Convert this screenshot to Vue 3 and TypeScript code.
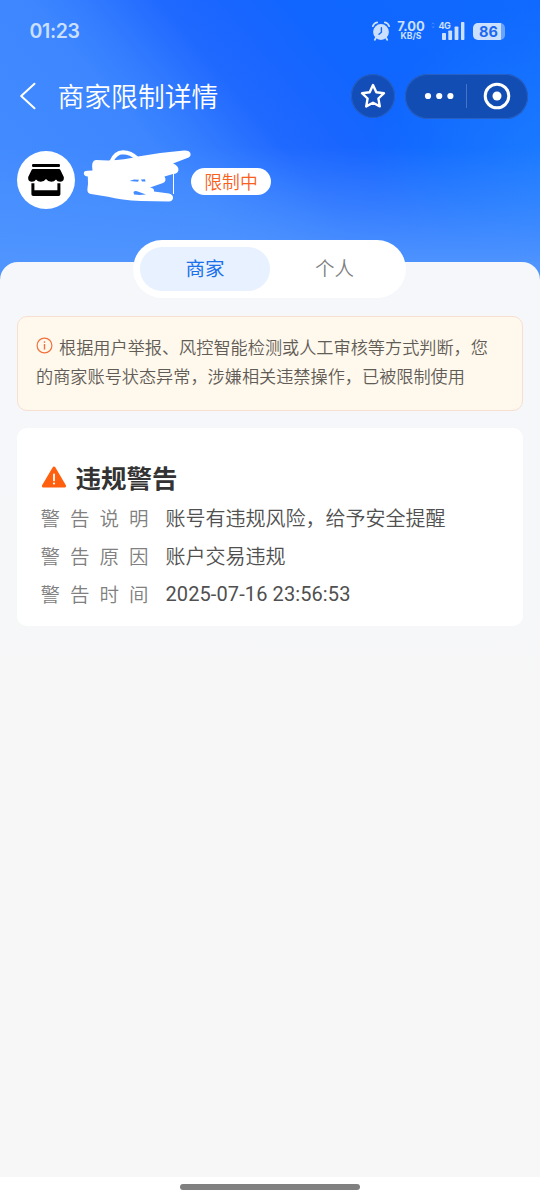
<script setup lang="ts">
import { ref } from 'vue'

interface DetailRow {
  label: string
  value: string
}

const tabs: string[] = ['商家', '个人']
const activeTab = ref(0)

const notice =
  '根据用户举报、风控智能检测或人工审核等方式判断，您的商家账号状态异常，涉嫌相关违禁操作，已被限制使用'

const rows: DetailRow[] = [
  { label: '警告说明', value: '账号有违规风险，给予安全提醒' },
  { label: '警告原因', value: '账户交易违规' },
  { label: '警告时间', value: '2025-07-16 23:56:53' },
]
</script>

<template>
  <div class="page">
    <header class="hero">
      <div class="status">
        <span class="clock">01:23</span>
        <div class="status-right">
          <svg class="alarm" width="20" height="20" viewBox="0 0 20 20">
            <circle cx="10" cy="11" r="7.9" fill="currentColor" />
            <path d="M1.8 5.2 Q3 2 6.2 1.4 M18.2 5.2 Q17 2 13.8 1.4" fill="none" stroke="currentColor" stroke-width="1.7" stroke-linecap="round" />
            <path d="M5 16.5 L3.8 18.8 M15 16.5 L16.2 18.8" stroke="currentColor" stroke-width="1.8" stroke-linecap="round" />
            <path d="M10.4 6.8 V11.2 L8 13.2" fill="none" stroke="#1768ff" stroke-width="1.4" stroke-linecap="round" />
          </svg>
          <div class="speed">
            <span class="speed-num">7.00</span>
            <span class="speed-unit">KB/S</span>
          </div>
          <svg class="signal" width="34" height="20" viewBox="0 0 34 20">
            <path d="M.9 3.4 L2.1 1.8 L3.3 3.4 M.9 5.2 L2.1 6.8 L3.3 5.2" fill="none" stroke="currentColor" stroke-width=".8" opacity=".35" />
            <text x="7.6" y="7.6" class="net">4G</text>
            <rect x="11" y="12" width="4" height="7" rx=".8" fill="currentColor" />
            <rect x="17.3" y="9.5" width="3.8" height="9.5" rx=".8" fill="currentColor" />
            <rect x="23.6" y="5.5" width="3.8" height="13.5" rx=".8" fill="currentColor" />
            <rect x="30" y="1" width="3.4" height="18" rx=".8" fill="currentColor" />
          </svg>
          <div class="battery"><span>86</span></div>
        </div>
      </div>

      <nav class="nav">
        <svg class="back" width="18" height="28" viewBox="0 0 18 28">
          <path d="M15.5 1.8 L2.2 14 L15.5 26.2" fill="none" stroke="#fff" stroke-width="2" stroke-linecap="round" stroke-linejoin="round" />
        </svg>
        <h1>商家限制详情</h1>
        <button class="star" aria-label="收藏">
          <svg width="28" height="28" viewBox="0 0 28 28">
            <path d="M14 3 L17.3 10.2 L25 11.2 L19.4 16.5 L20.8 24.4 L14 20.7 L7.2 24.4 L8.6 16.5 L3 11.2 L10.7 10.2 Z" fill="none" stroke="#fff" stroke-width="2.4" stroke-linejoin="round" />
          </svg>
        </button>
        <div class="capsule">
          <svg class="dots" width="30" height="8" viewBox="0 0 30 8">
            <circle cx="4" cy="4" r="3.1" fill="#fff" />
            <circle cx="15.2" cy="4" r="3.1" fill="#fff" />
            <circle cx="26.4" cy="4" r="3.1" fill="#fff" />
          </svg>
          <i class="split"></i>
          <svg class="target" width="28" height="28" viewBox="0 0 28 28">
            <circle cx="14" cy="14" r="11.8" fill="none" stroke="#fff" stroke-width="3" />
            <circle cx="14" cy="14" r="4.5" fill="#fff" />
          </svg>
        </div>
      </nav>

      <div class="profile">
        <div class="avatar">
          <svg width="38" height="36" viewBox="0 0 38 36">
            <rect x="5" y="2" width="28" height="3" rx="1.2" />
            <path d="M6 7 H32 Q33 7 33.4 8 L36.8 15 V17 Q36.2 19.8 33.2 19.8 Q30.2 19.8 29 17.6 Q27.3 19.8 24.3 19.8 Q21 19.8 19 17 Q17 19.8 13.7 19.8 Q10.7 19.8 9 17.6 Q7.8 19.8 4.8 19.8 Q1.8 19.8 1.2 17 V15 L4.6 8 Q5 7 6 7 Z" />
            <path d="M4.4 21.2 H7.4 V28.2 H30.4 V21.2 H33.4 V32.2 Q33.4 34 31.6 34 H6.2 Q4.4 34 4.4 32.2 Z" />
          </svg>
        </div>
        <svg class="scribble" width="110" height="56" viewBox="0 0 110 56">
          <path d="M28.5 13.5 Q32 4.5 40 4.2 Q48 4.4 54 10.5" fill="none" stroke="#fff" stroke-width="4" stroke-linecap="round" />
          <path
            fill="#fff"
            fill-rule="evenodd"
            d="M13 12 L25 12.5 Q42 12 55 8.5 Q78 4.5 101 2.6 Q107 2.4 107.6 6 Q108 9 103 10.6 L90 15.6 Q96 18 95.4 22.5 Q94.6 25.6 90 26 L81.5 28.4 Q84 33 80 35 L67 39.6 Q71.5 40 71 43.6 L86 45.6 Q90.6 47 90 50.3 Q89.6 53.4 86 53.4 L58 53 Q38 52.4 25 48.8 L8 46 Q4 45.6 4.4 41 L5 36 L4.8 28.6 Q.8 28 .8 25.2 Q1 22.8 4.5 22.8 L9.5 22.4 Q7.8 12.6 13 12 Z
               M46.5 33 L55 33.8 L56 31.8 L51 31.6 Z M58 31.4 L62 31.2 L62.5 33.4 L59 33.4 Z M50.5 44 Q51.5 42.8 54 43.2 L63 46.5 Q57 47.4 51 46.6 Z"
          />
          <path d="M90.5 25 V46" stroke="#fff" stroke-width="1" />
        </svg>
        <span class="tag">限制中</span>
      </div>
    </header>

    <main class="sheet">
      <div class="tabs" role="tablist">
        <button
          v-for="(tab, i) in tabs"
          :key="tab"
          class="tab"
          :class="{ active: activeTab === i }"
          role="tab"
          @click="activeTab = i"
        >{{ tab }}</button>
      </div>

      <section class="notice">
        <svg class="info" width="17" height="17" viewBox="0 0 17 17">
          <circle cx="8.5" cy="8.5" r="7.4" fill="none" stroke="#f2713c" stroke-width="1.2" />
          <rect x="7.8" y="7" width="1.4" height="5.6" fill="#f2713c" />
          <rect x="7.8" y="4.3" width="1.4" height="1.5" fill="#f2713c" />
        </svg>{{ notice }}
      </section>

      <section class="card">
        <h2>
          <svg class="warn" width="26" height="24" viewBox="0 0 26 24">
            <path d="M13 3 L23.6 21 H2.4 Z" fill="#ff6010" stroke="#ff6010" stroke-width="3" stroke-linejoin="round" />
            <path d="M13 9.5 V15.4" stroke="#fff" stroke-width="1.8" stroke-linecap="round" />
            <circle cx="13" cy="18.5" r="1.1" fill="#fff" />
          </svg>
          <span>违规警告</span>
        </h2>
        <dl>
          <div v-for="row in rows" :key="row.label" class="row">
            <dt>{{ row.label }}</dt>
            <dd>{{ row.value }}</dd>
          </div>
        </dl>
      </section>
    </main>

    <footer class="home"><i></i></footer>
  </div>
</template>

<style>
body {
  background: #f7f7f7;
}
</style>

<style scoped>
* {
  box-sizing: border-box;
  margin: 0;
  padding: 0;
}
.page {
  width: 540px;
  height: 1200px;
  display: flex;
  flex-direction: column;
  overflow: hidden;
  font-family: Roboto, 'Noto Sans CJK SC', sans-serif;
  font-weight: 350;
  background: #4f94ff;
}
button {
  border: 0;
  font: inherit;
}
svg {
  display: block;
  flex: none;
}
.hero {
  height: 262px;
  flex: none;
  background:
    linear-gradient(180deg, rgba(80, 149, 255, 0) 56%, rgba(80, 149, 255, 0.45) 78%, rgba(80, 149, 255, 0.95) 100%),
    radial-gradient(ellipse 200px 170px at 570px 170px, rgba(34, 136, 255, 0.65) 0%, rgba(34, 136, 255, 0) 100%),
    linear-gradient(50deg, #458dff 0%, #3d86ff 33%, #337cff 40%, #2069ff 50%, #1a66ff 57%, #1066ff 68%, #106aff 100%);
}
.status {
  height: 62px;
  display: flex;
  align-items: center;
  justify-content: space-between;
  padding: 0 35px 0 29.5px;
  color: #cbe0ff;
}
.clock {
  font: 600 19.5px/24px Inter, sans-serif;
  letter-spacing: -0.35px;
}
.status-right {
  display: flex;
  align-items: center;
}
.speed {
  display: flex;
  flex-direction: column;
  align-items: center;
  width: 29px;
  margin-left: 6px;
  font-family: Inter, sans-serif;
  font-weight: 700;
}
.speed-num {
  font-size: 13px;
  line-height: 11px;
}
.speed-unit {
  font-size: 8.6px;
  line-height: 9px;
}
.signal {
  margin-left: 5.5px;
}
.net {
  font: 700 9px Inter, sans-serif;
  letter-spacing: -0.6px;
  fill: currentColor;
}
.battery {
  width: 32px;
  height: 17px;
  margin-left: 8px;
  border-radius: 5px;
  background: linear-gradient(90deg, #cbe0ff 28.5px, #6aa4ff 28.5px);
  color: #1c69ef;
  font: 700 14.5px/18px Inter, sans-serif;
  padding-left: 6px;
}
.nav {
  height: 68px;
  display: flex;
  align-items: center;
  padding: 0 12.5px 0 19px;
}
.nav h1 {
  margin: 3px 0 0 20.5px;
  font-size: 26.8px;
  line-height: 36px;
  font-weight: 350;
  color: #fff;
}
.star {
  width: 44px;
  height: 44px;
  margin-left: auto;
  border-radius: 50%;
  background: #124db8;
  box-shadow: inset 0 0 0 1px #285fc2;
  display: grid;
  place-items: center;
}
.capsule {
  width: 122.5px;
  height: 45px;
  margin-left: 10px;
  border-radius: 23px;
  background: #124db3;
  box-shadow: inset 0 0 0 1px #285fc2;
  display: flex;
  align-items: center;
  padding-left: 19px;
}
.split {
  width: 1px;
  height: 24px;
  margin: 0 16px 0 12px;
  background: #4675c5;
}
.profile {
  height: 100px;
  display: flex;
  align-items: center;
  padding-left: 17px;
}
.avatar {
  width: 58px;
  height: 58px;
  border-radius: 50%;
  background: #fff;
  display: grid;
  place-items: center;
}
.scribble {
  margin: -8px 0 0 8px;
}
.tag {
  width: 80px;
  height: 27px;
  margin: 2px 0 0 -2px;
  border-radius: 14px;
  background: #fff;
  color: #f9601c;
  font-size: 17.8px;
  line-height: 29px;
  text-align: center;
}
.sheet {
  flex: 1;
  border-radius: 18px 18px 0 0;
  background: linear-gradient(180deg, #f6f7fa 0, #f6f7f9 340px, #f7f7f7 440px);
  padding: 0 17.5px 0 17px;
}
.tabs {
  width: 273px;
  height: 57.5px;
  margin: -22px auto 0;
  padding: 7px;
  border-radius: 29px;
  background: #fff;
  display: flex;
}
.tab {
  flex: 1;
  padding-top: 2px;
  border-radius: 22px;
  background: transparent;
  color: #808080;
  font-size: 19.5px;
  line-height: 42px;
}
.tab.active {
  background: #e7f1ff;
  color: #1c70ea;
  font-weight: 400;
}
.notice {
  height: 95px;
  margin-top: 18px;
  padding: 17px 18px 0;
  border: 1.5px solid #f8dfd0;
  border-radius: 10px;
  background: #fff8ec;
  color: #625c57;
  font-size: 17.17px;
  line-height: 29px;
}
.info {
  display: inline-block;
  margin-right: 6px;
  vertical-align: -0.5px;
}
.card {
  height: 197.5px;
  margin-top: 17.5px;
  padding: 32px 23.5px 0;
  border-radius: 10px;
  background: #fff;
}
.card h2 {
  height: 40px;
  display: flex;
  align-items: flex-start;
  gap: 9px;
  font-size: 25.5px;
  line-height: 38px;
  font-weight: 700;
  color: #333;
}
.warn {
  margin-top: 5px;
}
.row {
  height: 38px;
  display: flex;
  align-items: center;
  line-height: 38px;
}
.row dt {
  width: 125px;
  padding-top: 1px;
  font-size: 19.5px;
  letter-spacing: 10px;
  white-space: nowrap;
  color: #808080;
}
.row dd {
  font-size: 20px;
  color: #505050;
  white-space: nowrap;
}
.row:last-child dd {
  margin-top: -2px;
  font-weight: 400;
  letter-spacing: 0.1px;
}
.home {
  height: 23.5px;
  flex: none;
  background: #fff;
  display: flex;
  justify-content: center;
  padding-top: 7px;
}
.home i {
  width: 180px;
  height: 6.5px;
  border-radius: 4px;
  background: #808080;
}
</style>
